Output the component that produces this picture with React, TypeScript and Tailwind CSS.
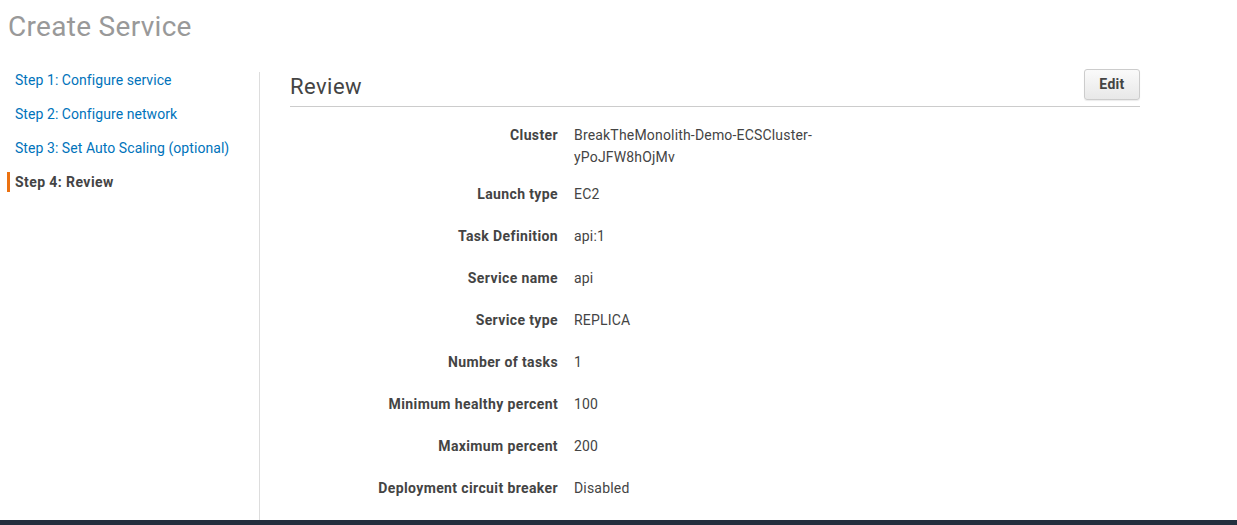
import React from 'react';

const steps = [
  { label: 'Step 1: Configure service', active: false },
  { label: 'Step 2: Configure network', active: false },
  { label: 'Step 3: Set Auto Scaling (optional)', active: false },
  { label: 'Step 4: Review', active: true },
];

const rows = [
  { label: 'Cluster', value: 'BreakTheMonolith-Demo-ECSCluster-yPoJFW8hOjMv' },
  { label: 'Launch type', value: 'EC2' },
  { label: 'Task Definition', value: 'api:1' },
  { label: 'Service name', value: 'api' },
  { label: 'Service type', value: 'REPLICA' },
  { label: 'Number of tasks', value: '1' },
  { label: 'Minimum healthy percent', value: '100' },
  { label: 'Maximum percent', value: '200' },
  { label: 'Deployment circuit breaker', value: 'Disabled' },
];

export default function App() {
  return (
    <div className="min-h-screen bg-white text-[#444] font-['Roboto','Helvetica_Neue',Arial,sans-serif]">
      <h1 className="pt-[11px] pl-[8px] text-[28px] leading-[32px] tracking-[0.3px] text-[#999] font-normal">
        Create Service
      </h1>

      <div className="flex mt-[20px]">
        {/* wizard steps */}
        <nav className="w-[259px] pl-[7px] flex flex-col">
          {steps.map((s) => (
            <div key={s.label} className="h-[34px] py-[7px]">
              <div
                className={
                  s.active
                    ? 'border-l-[3px] border-[#ec7211] pl-[5px] text-[14px] leading-[20px] tracking-[0.42px] font-bold text-[#444]'
                    : 'border-l-[3px] border-transparent pl-[5px] text-[14px] leading-[20px] tracking-[0.06px] text-[#0073bb]'
                }
              >
                {s.label}
              </div>
            </div>
          ))}
        </nav>

        <div className="w-px mt-[9px] bg-[#ddd] self-stretch" />

        {/* review panel */}
        <main className="ml-[30px] w-[850px] pt-[6px] pb-[11px]">
          <div className="flex items-center justify-between border-b border-[#ccc] pb-[6px]">
            <h2 className="pt-[5px] text-[22px] leading-[26px] tracking-[0.45px] font-normal text-[#444]">Review</h2>
            <button className="w-[56px] h-[31px] rounded-[3px] border border-[#ccc] bg-gradient-to-b from-[#fafafa] to-[#e8e8e8] text-[14px] font-bold tracking-[0.3px] text-[#444] shadow-[0_1px_1px_rgba(0,0,0,0.08)]">
              Edit
            </button>
          </div>

          <div className="mt-[7px]">
            {rows.map((r, i) => (
              <div
                key={r.label}
                className={i === 0 ? 'flex pt-[10px] pb-[5px]' : 'flex py-[10px]'}
              >
                <div className="w-[268px] text-right text-[14px] leading-[22px] tracking-[0.38px] font-bold text-[#444]">
                  {r.label}
                </div>
                <div className="ml-[16px] w-[260px] text-[14px] leading-[22px] tracking-[0.18px] text-[#444]">
                  {r.value}
                </div>
              </div>
            ))}
          </div>
        </main>
      </div>

      <footer className="h-[5px] bg-[#232f3e]" />
    </div>
  );
}
